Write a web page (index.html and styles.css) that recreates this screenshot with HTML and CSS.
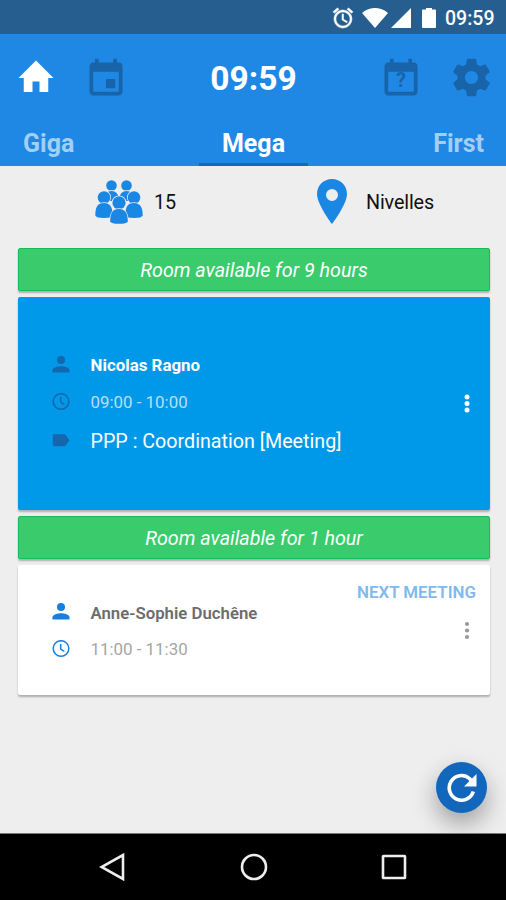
FILE: index.html
```html
<!DOCTYPE html>
<html lang="en">
<head>
<meta charset="utf-8">
<title>Rooms</title>
<link rel="stylesheet" href="styles.css">
</head>
<body>
<div class="screen">
  <div class="status">
    <svg class="alarm" viewBox="0 0 24 24"><path fill="currentColor" stroke="currentColor" stroke-width=".5" d="M22 5.720l-4.600-3.860-1.290 1.530 4.600 3.860L22 5.720zM7.880 3.390L6.600 1.860 2 5.710l1.290 1.530 4.590-3.850zM12.500 8H11v6l4.750 2.850.75-1.230-4-2.370V8zM12 4c-4.970 0-9 4.030-9 9s4.020 9 9 9a9 9 0 0 0 0-18zm0 16c-3.870 0-7-3.130-7-7s3.130-7 7-7 7 3.130 7 7-3.130 7-7 7z"/></svg>
    <svg class="wifi" viewBox="0 0 26 20"><path fill="currentColor" d="M13 20 0 5C7-1.700 19-1.700 26 5z"/></svg>
    <svg class="signal" viewBox="0 0 20 20"><path fill="currentColor" d="M20 0v20H0z"/></svg>
    <svg class="battery" viewBox="0 0 14 20"><path fill="currentColor" d="M4 0h6v1.500h3q1 0 1 1V19q0 1-1 1H1q-1 0-1-1V2.500q0-1 1-1h3z"/></svg>
    <span class="status-time">09:59</span>
  </div>
  <header class="header">
    <div class="toolbar">
      <svg class="home" viewBox="0 0 24 24"><path fill="currentColor" d="M10 20.500v-6h4v6h5v-8h3L12 2.500 2 12.500h3v8z"/></svg>
      <svg class="calendar" viewBox="0 0 24 24"><path fill="currentColor" d="M17 12h-5v5h5v-5zM16 1v2H8V1H6v2H5c-1.110 0-2 .9-2 2v14c0 1.100.89 2 2 2h14c1.100 0 2-.9 2-2V5c0-1.100-.9-2-2-2h-1V1h-2zm3 18H5V8h14v11z"/></svg>
      <h1 class="clock">09:59</h1>
      <div class="calendar query">
        <svg class="calendar" viewBox="0 0 24 24"><path fill="currentColor" d="M16 1v2H8V1H6v2H5c-1.110 0-2 .9-2 2v14c0 1.100.89 2 2 2h14c1.100 0 2-.9 2-2V5c0-1.100-.9-2-2-2h-1V1h-2zm3 18H5V8h14v11z"/></svg>
        <span class="mark">?</span>
      </div>
      <svg class="gear" viewBox="0 0 24 24"><path fill="currentColor" d="M19.430 12.980c.04-.32.07-.64.07-.98s-.03-.66-.07-.98l2.110-1.650c.19-.15.24-.42.12-.64l-2-3.460c-.12-.22-.39-.3-.61-.22l-2.490 1c-.52-.4-1.080-.73-1.690-.98l-.38-2.650A.488.488 0 0 0 14 2h-4c-.25 0-.46.18-.49.42l-.38 2.650c-.61.25-1.170.59-1.690.98l-2.490-1c-.23-.09-.49 0-.61.22l-2 3.460c-.13.22-.07.49.12.64l2.110 1.650c-.04.32-.07.65-.07.98s.03.66.07.98l-2.110 1.650c-.19.15-.24.42-.12.64l2 3.460c.12.22.39.3.61.22l2.490-1c.52.4 1.080.73 1.690.98l.38 2.650c.03.24.24.42.49.42h4c.25 0 .46-.18.49-.42l.38-2.650c.61-.25 1.170-.59 1.690-.98l2.490 1c.23.09.49 0 .61-.22l2-3.460c.12-.22.07-.49-.12-.64l-2.110-1.650zM12 15.500c-1.930 0-3.500-1.570-3.500-3.500s1.570-3.500 3.500-3.500 3.500 1.570 3.500 3.500-1.570 3.500-3.500 3.500z"/></svg>
    </div>
    <nav class="tabs"><span class="tab">Giga</span><span class="tab active">Mega</span><span class="tab last">First</span></nav>
  </header>
  <main class="content">
    <div class="info">
      <svg class="people" viewBox="0 0 48 44">
        <g class="person"><circle cx="16.500" cy="5.500" r="5.300"/><path d="M9 21v-2q1-8 7.500-8t7.500 8v2z"/></g>
        <g class="person"><circle cx="31.500" cy="5.500" r="5.300"/><path d="M24 21v-2q1-8 7.500-8t7.500 8v2z"/></g>
        <g class="person"><circle cx="9" cy="17.500" r="6.300"/><path d="M.3 35.500c0-8 2-12.500 8.700-12.500s8.700 5 8.700 12.500q-1 2.500-8.700 2.500t-8.700-2.500z"/></g>
        <g class="person"><circle cx="39" cy="17.500" r="6.300"/><path d="M30.300 35.500c0-8 2-12.500 8.700-12.500s8.700 5 8.700 12.500q-1 2.500-8.700 2.500t-8.700-2.500z"/></g>
        <g class="person"><circle cx="24" cy="22.800" r="6.600"/><path d="M15.200 41.500c0-8 2-12.500 8.800-12.500s8.800 5 8.800 12.500q-1 2.300-8.800 2.300t-8.800-2.300z"/></g>
      </svg>
      <span class="count">15</span>
      <svg class="pin" viewBox="0 0 30 45"><path fill="currentColor" fill-rule="evenodd" d="M15 0C6.600 0 0 6.600 0 15c0 10.500 15 30 15 30s15-19.500 15-30C30 6.600 23.400 0 15 0zm0 22a6 6 0 1 1 0-12 6 6 0 0 1 0 12z"/></svg>
      <span class="city">Nivelles</span>
    </div>
    <div class="list">
      <div class="banner">Room available for 9 hours</div>
      <section class="card current">
        <div class="rows">
          <div class="row"><svg class="ico" viewBox="0 0 18 18"><circle cx="9" cy="4" r="4"/><path d="M.5 16.500v-2.200c0-2.800 5.500-4 8.500-4s8.500 1.200 8.500 4v2.200z"/></svg><b class="name">Nicolas Ragno</b></div>
          <div class="row"><svg class="ico line" viewBox="0 0 18 18"><circle cx="9" cy="8.500" r="7.800"/><path d="M8.700 4v5l3.600 2.500"/></svg><span class="time">09:00 - 10:00</span></div>
          <div class="row topic"><svg class="ico" viewBox="0 0 18 18"><path d="M2 2.300h10q1 0 1.600.8l3.900 5.200-3.900 5.200q-.6.800-1.600.8H2q-1.200 0-1.200-1.300V3.600Q.8 2.300 2 2.300z"/></svg><span class="subject">PPP : Coordination [Meeting]</span></div>
        </div>
        <svg class="more" viewBox="0 0 6 20"><circle cx="3" cy="3" r="2.500"/><circle cx="3" cy="9.500" r="2.500"/><circle cx="3" cy="16" r="2.500"/></svg>
      </section>
      <div class="banner">Room available for 1 hour</div>
      <section class="card next">
        <div class="rows">
          <div class="row"><svg class="ico" viewBox="0 0 18 18"><circle cx="9" cy="4" r="4"/><path d="M.5 16.500v-2.200c0-2.800 5.500-4 8.500-4s8.500 1.200 8.500 4v2.200z"/></svg><b class="name">Anne-Sophie Duchêne</b></div>
          <div class="row"><svg class="ico line" viewBox="0 0 18 18"><circle cx="9" cy="8.500" r="7.800"/><path d="M8.700 4v5l3.600 2.500"/></svg><span class="time">11:00 - 11:30</span></div>
        </div>
        <div class="side">
          <span class="label">NEXT MEETING</span>
          <svg class="more" viewBox="0 0 6 20"><circle cx="3" cy="3" r="2.100"/><circle cx="3" cy="9.500" r="2.100"/><circle cx="3" cy="16" r="2.100"/></svg>
        </div>
      </section>
    </div>
    <div class="fab"><svg viewBox="0 0 30 30"><path fill="none" stroke="currentColor" stroke-width="3.600" d="M26.300 18.500A12.300 12.300 0 1 1 22.500 5.500l2.500 3"/><path fill="currentColor" d="M29.500 1v12.500H17z"/></svg></div>
  </main>
  <footer class="navbar">
    <svg viewBox="0 0 28 28"><path d="M24 2v24L2.500 14z"/></svg>
    <svg viewBox="0 0 28 28"><circle cx="14" cy="14" r="12"/></svg>
    <svg viewBox="0 0 28 28"><rect x="3" y="3" width="22" height="22" rx=".6"/></svg>
  </footer>
</div>
</body>
</html>
```
FILE: styles.css
```css
* { box-sizing: border-box; }
body { margin: 0; font-family: Roboto, "Liberation Sans", sans-serif; }
svg { display: block; flex: none; }
span, b, h1 { white-space: nowrap; }
.screen { width: 506px; height: 900px; display: flex; flex-direction: column; background: #eee; overflow: hidden; }

.status { height: 34px; flex: none; background: #265e8f; color: #fff; display: flex; align-items: center; padding: 1px 10px 0 331px; }
.alarm { width: 24px; height: 24px; }
.wifi { width: 26px; height: 20px; margin-left: 7px; }
.signal { width: 20px; height: 20px; margin-left: 3px; }
.battery { width: 14px; height: 20px; margin-left: 11px; }
.status-time { font-size: 19.500px; font-weight: 500; margin-left: 9px; padding-top: 2px; }

.header { height: 132px; flex: none; background: #1f88e5; color: #fff; }
.toolbar { height: 86px; display: flex; align-items: center; justify-content: space-between; padding: 0 12px 0 15px; }
.home { width: 42px; height: 42px; }
.calendar { width: 44px; height: 44px; color: #1963a9; }
.toolbar > .calendar { margin: 3px 61px 0 27px; }
.toolbar > .query { position: relative; margin: 3px 26px 0 61px; }
.mark { position: absolute; left: 0; right: 0; top: 12px; text-align: center; font-size: 20px; line-height: 23px; font-weight: 700; }
.clock { margin: 2px 0 0; flex: 1; text-align: center; font-size: 33.500px; font-weight: 700; }
.gear { width: 45px; height: 45px; color: #1963a9; }
.tabs { height: 46px; display: grid; grid-template-columns: 199px 109px 198px; font-size: 25px; font-weight: 700; line-height: 47px; }
.tab { height: 46px; color: #a3cff5; padding-left: 23px; }
.tab.active { color: #fff; text-align: center; padding: 0; border-bottom: 3px solid #1c67ab; }
.tab.last { text-align: right; padding: 0 22px 0 0; }

.content { flex: 1; position: relative; }
.info { height: 82px; display: flex; align-items: center; color: #1b87e5; padding: 0 0 11px 95px; font-size: 19.800px; }
.people { width: 48px; height: 44px; }
.person { fill: #1b87e5; stroke: #eee; stroke-width: 1.500px; paint-order: stroke; }
.count, .city { color: #111; padding-top: 2px; }
.count { width: 163px; padding-left: 11px; }
.pin { width: 30px; height: 45px; margin-left: 11px; }
.city { margin-left: 19px; letter-spacing: -.15px; }

.list { display: flex; flex-direction: column; gap: 6px; padding: 0 16px 0 18px; }
.banner { height: 43px; background: #39cb6c; border: 1px solid #16bd58; border-radius: 2px; color: #fff; font-size: 19.700px; font-style: italic; line-height: 43px; text-align: center; box-shadow: 0 2px 2px #0004; }
.card { border-radius: 2px; box-shadow: 0 2px 2px #0004; display: flex; justify-content: space-between; }
.rows { display: flex; flex-direction: column; }
.row { display: flex; align-items: center; height: 37px; gap: 20.500px; }
.ico { width: 18px; height: 18px; fill: currentColor; }
.line { fill: none; stroke: currentColor; stroke-width: 1.500px; }
.name, .time { font-size: 16.900px; }
.name { font-weight: 700; }
.current { height: 213px; background: #0098e8; color: #fff; align-items: center; padding: 0 20px 0 34px; }
.current .ico { color: #1466ae; }
.current .time { color: #b5e0fa; }
.topic { height: 41px; }
.subject { font-size: 19.700px; padding-top: 2px; }
.more { width: 6px; height: 20px; fill: currentColor; }
.next { height: 130px; background: #fff; padding: 28px 14px 0 34px; }
.next .ico { color: #177fdf; }
.next .name { color: #6c6c6c; font-weight: 600; font-size: 16.800px; padding-top: 2px; }
.next .time { color: #a5a5a5; }
.side { display: flex; flex-direction: column; align-items: flex-end; margin-top: -12px; color: #999; gap: 18px; }
.side .more { margin-right: 6px; }
.label { color: #80b9ef; font-size: 16.900px; line-height: 22px; font-weight: 600; }

.fab { position: absolute; left: 436px; top: 596px; width: 51px; height: 51px; border-radius: 50%; background: #1267bd; color: #fff; display: grid; place-items: center; box-shadow: 0 11px 24px #0005; }
.fab svg { width: 30px; height: 30px; }
.navbar { height: 67px; flex: none; background: #000; border-top: 1px solid #777; display: flex; justify-content: space-between; align-items: center; padding: 0 98px 0 99px; position: relative; }
.navbar svg { width: 28px; height: 28px; fill: none; stroke: #eee; stroke-width: 2.600px; }
```
